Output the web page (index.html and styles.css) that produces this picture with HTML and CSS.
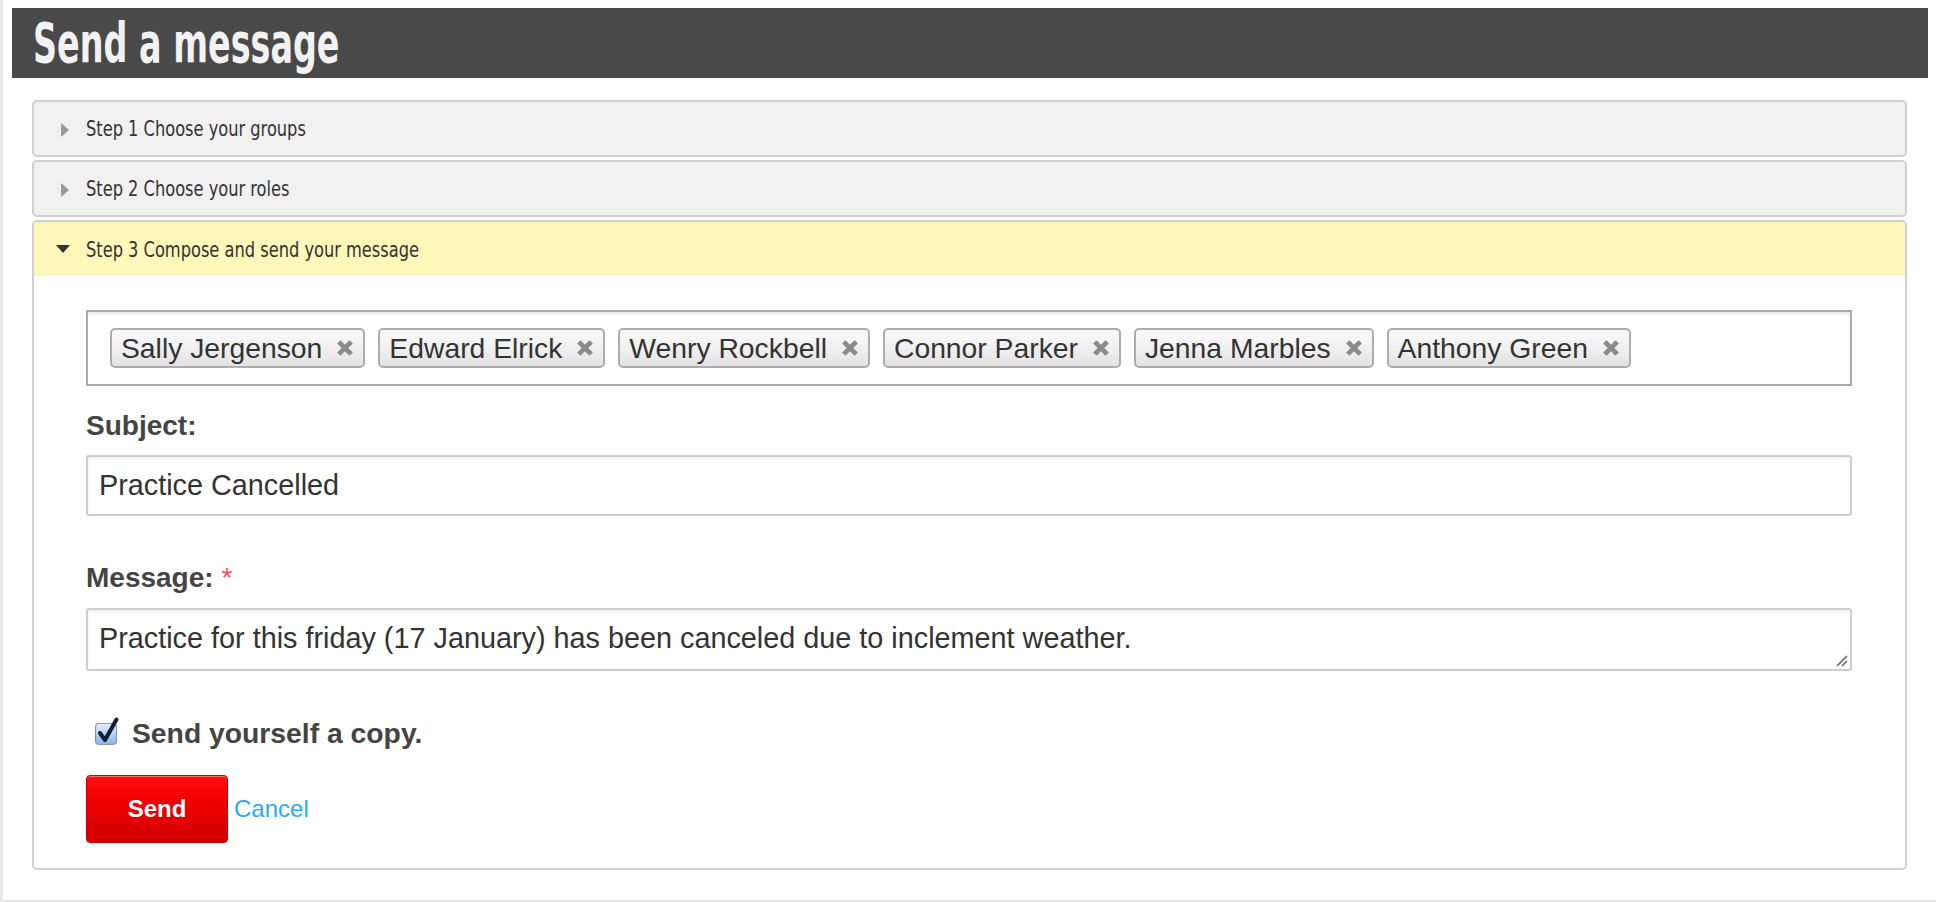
FILE: index.html
```html
<!DOCTYPE html>
<html>
<head>
<meta charset="utf-8">
<title>Send a message</title>
<link rel="stylesheet" href="styles.css">
</head>
<body>
<div class="page">
  <header class="title-bar"><h1>Send a message</h1></header>
  <div class="accordion">
    <div class="step">
      <div class="step-head">
        <svg class="arrow-right" width="8" height="14" viewBox="0 0 8 14"><polygon points="0,0 8,7 0,14" fill="#9a9a9a"/></svg>
        <span class="step-title">Step 1 Choose your groups</span>
      </div>
    </div>
    <div class="step">
      <div class="step-head">
        <svg class="arrow-right" width="8" height="14" viewBox="0 0 8 14"><polygon points="0,0 8,7 0,14" fill="#9a9a9a"/></svg>
        <span class="step-title">Step 2 Choose your roles</span>
      </div>
    </div>
    <div class="step open">
      <div class="step-head active">
        <svg class="arrow-down" width="14" height="8" viewBox="0 0 14 8"><polygon points="0,0 14,0 7,8" fill="#333"/></svg>
        <span class="step-title">Step 3 Compose and send your message</span>
      </div>
      <div class="step-body">
        <div class="recipients">
          <span class="tag">Sally Jergenson<svg class="x" viewBox="0 0 16 16"><path d="M2.5 2.5 L13.5 13.5 M13.5 2.5 L2.5 13.5" stroke="#8a8a8a" stroke-width="4.2"/></svg></span>
          <span class="tag">Edward Elrick<svg class="x" viewBox="0 0 16 16"><path d="M2.5 2.5 L13.5 13.5 M13.5 2.5 L2.5 13.5" stroke="#8a8a8a" stroke-width="4.2"/></svg></span>
          <span class="tag">Wenry Rockbell<svg class="x" viewBox="0 0 16 16"><path d="M2.5 2.5 L13.5 13.5 M13.5 2.5 L2.5 13.5" stroke="#8a8a8a" stroke-width="4.2"/></svg></span>
          <span class="tag">Connor Parker<svg class="x" viewBox="0 0 16 16"><path d="M2.5 2.5 L13.5 13.5 M13.5 2.5 L2.5 13.5" stroke="#8a8a8a" stroke-width="4.2"/></svg></span>
          <span class="tag">Jenna Marbles<svg class="x" viewBox="0 0 16 16"><path d="M2.5 2.5 L13.5 13.5 M13.5 2.5 L2.5 13.5" stroke="#8a8a8a" stroke-width="4.2"/></svg></span>
          <span class="tag">Anthony Green<svg class="x" viewBox="0 0 16 16"><path d="M2.5 2.5 L13.5 13.5 M13.5 2.5 L2.5 13.5" stroke="#8a8a8a" stroke-width="4.2"/></svg></span>
        </div>
        <label class="field-label subject-label">Subject:</label>
        <div class="input">Practice Cancelled</div>
        <label class="field-label message-label">Message: <span class="req">*</span></label>
        <div class="input textarea">Practice for this friday (17 January) has been canceled due to inclement weather.
          <svg class="grip" width="14" height="14" viewBox="0 0 14 14"><path d="M13 3 L3 13 M13 8 L8 13" stroke="#666" stroke-width="1.6"/></svg>
        </div>
        <div class="copy-row">
          <svg class="checkbox" width="26" height="30" viewBox="0 0 26 30">
            <defs>
              <linearGradient id="cb" x1="0" y1="0" x2="0" y2="1">
                <stop offset="0" stop-color="#e6effb"/>
                <stop offset="0.5" stop-color="#b5d0f3"/>
                <stop offset="1" stop-color="#86b3ec"/>
              </linearGradient>
            </defs>
            <rect x="1.5" y="7.5" width="21" height="21" rx="3.5" fill="url(#cb)" stroke="#8d97a5" stroke-width="1.2"/>
            <path d="M6 17 L11 24 L22.5 3.5" stroke="#0f1f3a" stroke-width="4" fill="none" stroke-linecap="round" stroke-linejoin="round"/>
          </svg>
          <span>Send yourself a copy.</span>
        </div>
        <div class="actions">
          <button class="send">Send</button>
          <a class="cancel" href="#">Cancel</a>
        </div>
      </div>
    </div>
  </div>
</div>
</body>
</html>
```
FILE: styles.css
```css
html, body {
  margin: 0;
  padding: 0;
}
body {
  background: #e8e8e8;
  font-family: "Liberation Sans", Arial, sans-serif;
}
.page {
  margin-left: 3px;
  height: 900px;
  background: #fff;
  padding-top: 8px;
  box-sizing: border-box;
}
.title-bar {
  margin: 0 8px 0 9px;
  height: 70px;
  background: #494949;
  display: flex;
  align-items: center;
  padding-left: 21px;
}
.title-bar h1 {
  margin: 0;
  color: #f2f2f2;
  font-family: "DejaVu Sans Condensed", "DejaVu Sans", sans-serif;
  font-weight: bold;
  font-size: 55px;
  line-height: 60px;
  transform: scaleX(0.675);
  transform-origin: left center;
  white-space: nowrap;
}
.accordion {
  margin: 22px 29px 0 29px;
  display: flex;
  flex-direction: column;
  gap: 3px;
}
.step {
  border: 2px solid #d0d0d0;
  border-radius: 5px;
  background: #f1f1f1;
  overflow: hidden;
}
.step-head {
  height: 53px;
  display: flex;
  align-items: center;
  padding-left: 27px;
  color: #333;
}
.step-title {
  font-family: "DejaVu Sans Condensed", "DejaVu Sans", sans-serif;
  font-size: 22px;
  transform: scaleX(0.82);
  transform-origin: left center;
  white-space: nowrap;
}
.step-head .arrow-right {
  margin-right: 17px;
  margin-top: 2px;
}
.step-head.active {
  background: #fdf8b9;
  height: 54px;
  padding-left: 22px;
}
.step-head .arrow-down {
  margin-right: 16px;
  margin-top: 0;
}
.step.open {
  background: #fff;
}
.step-body {
  padding: 34px 53px 25px 52px;
}
.recipients {
  border: 2px solid #ababab;
  box-shadow: inset 0 4px 4px -2px #e6e6e6;
  height: 76px;
  box-sizing: border-box;
  padding: 16px 22px;
  display: flex;
  gap: 13px;
}
.tag {
  height: 40px;
  box-sizing: border-box;
  border: 2px solid #adadad;
  border-radius: 5px;
  background: linear-gradient(#fafafa, #f0f0f0 50%, #e2e2e2);
  display: flex;
  align-items: center;
  padding: 0 9px 0 9px;
  font-size: 28.3px;
  color: #333;
  white-space: nowrap;
}
.tag .x {
  width: 18px;
  height: 18px;
  margin-left: 14px;
}
.field-label {
  display: block;
  font-weight: bold;
  font-size: 28px;
  line-height: 32px;
  color: #444;
}
.subject-label {
  margin-top: 24px;
}
.message-label {
  margin-top: 46px;
}
.req {
  color: #ee5555;
  font-weight: normal;
}
.input {
  margin-top: 13px;
  border: 2px solid #cdcdcd;
  border-radius: 3px;
  box-shadow: inset 0 2px 3px rgba(0,0,0,0.06);
  height: 61px;
  box-sizing: border-box;
  padding: 0 11px;
  display: flex;
  align-items: center;
  font-size: 28.8px;
  color: #333;
  white-space: nowrap;
}
.input.textarea {
  margin-top: 14px;
  height: 63px;
  position: relative;
  align-items: flex-start;
  padding-top: 12px;
  line-height: 33px;
}
.grip {
  position: absolute;
  right: 2px;
  bottom: 2px;
}
.copy-row {
  margin-top: 46px;
  display: flex;
  align-items: center;
  gap: 12px;
  padding-left: 8px;
  font-size: 28.3px;
  line-height: 32px;
  font-weight: bold;
  color: #444;
}
.checkbox {
  margin-top: -5px;
}
.actions {
  margin-top: 26px;
  display: flex;
  align-items: center;
  gap: 6px;
}
.send {
  width: 142px;
  height: 68px;
  border: 1px solid #c40000;
  border-radius: 4px;
  background: linear-gradient(#ff1010, #f20000 35%, #d00000);
  box-shadow: inset 0 1px 0 rgba(255,255,255,0.4);
  color: #fff;
  font-family: "Liberation Sans", Arial, sans-serif;
  font-weight: bold;
  font-size: 24px;
}
.cancel {
  color: #2ea9f4;
  font-size: 24px;
  text-decoration: none;
}
```
